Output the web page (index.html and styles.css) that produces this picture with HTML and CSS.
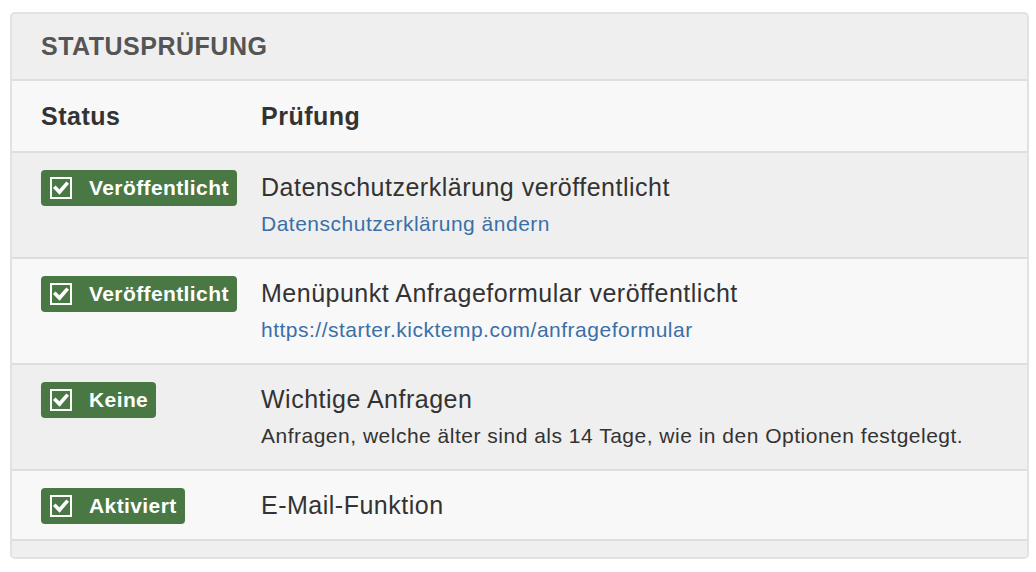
FILE: index.html
```html
<!DOCTYPE html>
<html lang="de">
<head>
<meta charset="utf-8">
<title>Statusprüfung</title>
<link rel="stylesheet" href="styles.css">
</head>
<body>
<div class="panel">
  <div class="panel-heading">STATUSPRÜFUNG</div>
  <div class="row head">
    <div class="col-status">Status</div>
    <div class="col-check">Prüfung</div>
  </div>
  <div class="row odd">
    <div class="col-status"><span class="badge"><svg class="ico" viewBox="0 0 22 22"><rect x="1" y="1" width="20" height="20" fill="none" stroke="#fff" stroke-width="2"/><polyline points="5.5,11 9.5,15 16.5,7" fill="none" stroke="#fff" stroke-width="3.6" stroke-linecap="square"/></svg>Veröffentlicht</span></div>
    <div class="col-check"><div class="main">Datenschutzerklärung veröffentlicht</div><a class="link" href="#">Datenschutzerklärung ändern</a></div>
  </div>
  <div class="row even">
    <div class="col-status"><span class="badge"><svg class="ico" viewBox="0 0 22 22"><rect x="1" y="1" width="20" height="20" fill="none" stroke="#fff" stroke-width="2"/><polyline points="5.5,11 9.5,15 16.5,7" fill="none" stroke="#fff" stroke-width="3.6" stroke-linecap="square"/></svg>Veröffentlicht</span></div>
    <div class="col-check"><div class="main">Menüpunkt Anfrageformular veröffentlicht</div><a class="link" href="#">https://starter.kicktemp.com/anfrageformular</a></div>
  </div>
  <div class="row odd">
    <div class="col-status"><span class="badge"><svg class="ico" viewBox="0 0 22 22"><rect x="1" y="1" width="20" height="20" fill="none" stroke="#fff" stroke-width="2"/><polyline points="5.5,11 9.5,15 16.5,7" fill="none" stroke="#fff" stroke-width="3.6" stroke-linecap="square"/></svg>Keine</span></div>
    <div class="col-check"><div class="main">Wichtige Anfragen</div><div class="note">Anfragen, welche älter sind als 14 Tage, wie in den Optionen festgelegt.</div></div>
  </div>
  <div class="row even short">
    <div class="col-status"><span class="badge"><svg class="ico" viewBox="0 0 22 22"><rect x="1" y="1" width="20" height="20" fill="none" stroke="#fff" stroke-width="2"/><polyline points="5.5,11 9.5,15 16.5,7" fill="none" stroke="#fff" stroke-width="3.6" stroke-linecap="square"/></svg>Aktiviert</span></div>
    <div class="col-check"><div class="main">E-Mail-Funktion</div></div>
  </div>
  <div class="panel-footer"></div>
</div>
</body>
</html>
```

FILE: styles.css
```css
html, body {
  margin: 0;
  padding: 0;
  background: #fff;
}
body {
  font-family: "Liberation Sans", Arial, Helvetica, sans-serif;
  color: #333;
}
.panel {
  margin: 12px 7px 12px 10px;
  border: 2px solid #e2e2e2;
  border-radius: 5px;
  background: #efefef;
  overflow: hidden;
}
.panel-heading {
  height: 65px;
  display: flex;
  align-items: center;
  padding: 0 29px;
  font-size: 25px;
  letter-spacing: 0.5px;
  font-weight: bold;
  color: #555;
  border-bottom: 2px solid #dedede;
}
.row {
  display: grid;
  grid-template-columns: 249px 1fr;
  border-bottom: 2px solid #dedede;
}
.row.head {
  height: 70px;
  align-items: center;
  background: #f8f8f8;
  font-size: 25px;
  letter-spacing: 0.5px;
  font-weight: bold;
  color: #333;
}
.row.odd { background: #efefef; height: 104px; }
.row.even { background: #f8f8f8; height: 104px; }
.row.short { height: 68px; }
.col-status {
  padding-left: 29px;
}
.row:not(.head) .col-status {
  padding-top: 17px;
}
.row:not(.head) .col-check {
  padding-top: 19px;
}
.badge {
  display: inline-flex;
  align-items: center;
  height: 36px;
  padding: 0 8px 0 9px;
  background: #4a7845;
  border-radius: 4px;
  color: #fff;
  font-size: 21px;
  letter-spacing: 0.4px;
  font-weight: bold;
}
.ico {
  width: 22px;
  height: 22px;
  margin-right: 17px;
}
.main {
  font-size: 25px;
  letter-spacing: 0.5px;
  line-height: 30px;
  color: #333;
}
.link {
  display: block;
  margin-top: 10px;
  font-size: 21px;
  letter-spacing: 0.5px;
  line-height: 24px;
  color: #3a6fa8;
  text-decoration: none;
}
.note {
  margin-top: 10px;
  font-size: 21px;
  letter-spacing: 0.5px;
  line-height: 24px;
  color: #333;
}
.panel-footer {
  height: 16px;
  background: #efefef;
}
```
